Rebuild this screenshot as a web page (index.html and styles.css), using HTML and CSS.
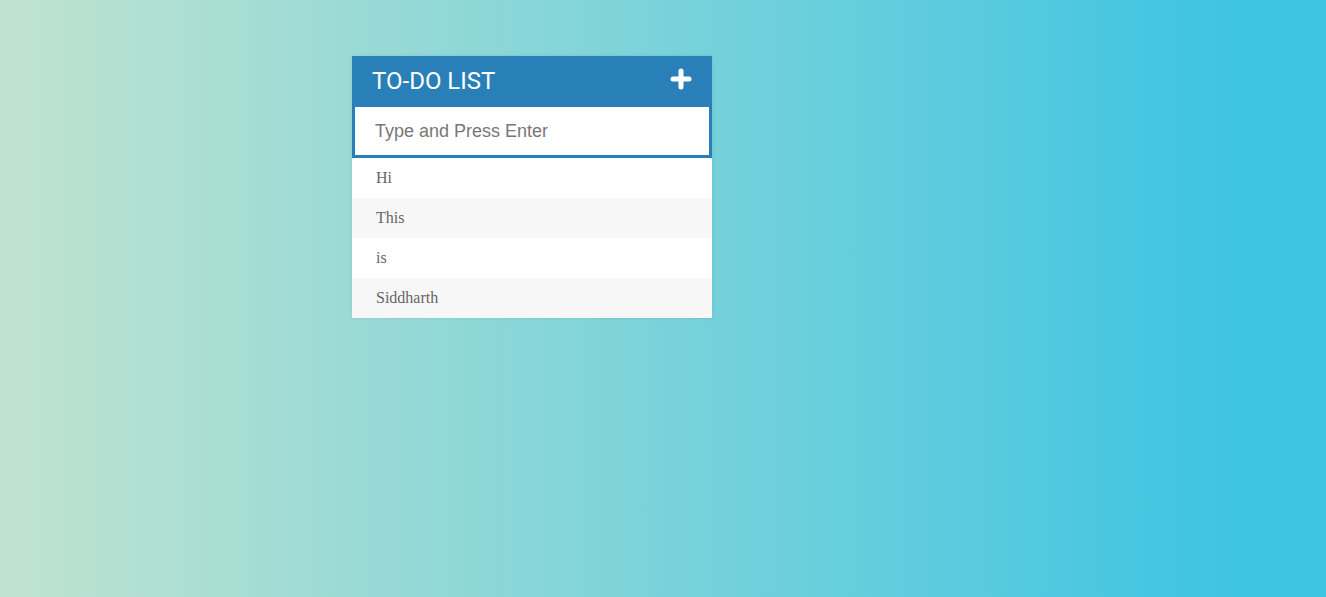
FILE: index.html
```html
<!DOCTYPE html>
<html>
<head>
<meta charset="utf-8">
<link rel="stylesheet" href="styles.css">
</head>
<body>
<div class="page">
  <div class="card">
    <div class="header">
      <h1 class="title">TO-DO LIST</h1>
      <svg class="plus" width="22" height="22" viewBox="0 0 22 22"><path d="M11 3 V19 M3 11 H19" stroke="#fff" stroke-width="5" stroke-linecap="round"/></svg>
    </div>
    <input class="entry" type="text" placeholder="Type and Press Enter" autofocus>
    <ul class="list">
      <li class="item">Hi</li>
      <li class="item">This</li>
      <li class="item">is</li>
      <li class="item">Siddharth</li>
    </ul>
  </div>
</div>
</body>
</html>
```

FILE: styles.css
```css
html, body {
  margin: 0;
  height: 100%;
}
body {
  background: linear-gradient(to right, #c0e3d0 0%, #3dc4e2 93%, #3cc4e2 100%);
  font-family: "Liberation Serif", serif;
}
.page {
  padding: 56px 0 0 352px;
}
.card {
  width: 360px;
  background: #fff;
  box-shadow: 0 0 3px rgba(0,0,0,0.1);
}
.header {
  background: #2980b9;
  height: 51px;
  display: flex;
  align-items: center;
  justify-content: space-between;
  padding: 0 20px;
}
.title {
  margin: 0;
  font-family: Roboto, sans-serif;
  font-weight: 400;
  font-size: 24px;
  color: #fff;
  padding-bottom: 2px;
}
.plus {
  display: block;
  margin-top: -6px;
}
.entry {
  display: block;
  box-sizing: border-box;
  width: 100%;
  height: 51px;
  margin: 0;
  border: 3px solid #2980b9;
  border-top: 0;
  padding: 0 20px 0;
  font-family: "Liberation Sans", Arial, sans-serif;
  font-size: 18px;
  color: #444;
  outline: none;
  background: #fff;
}
.entry::placeholder {
  color: #777;
}
.list {
  list-style: none;
  margin: 0;
  padding: 0;
}
.item {
  height: 40px;
  line-height: 40px;
  padding-left: 24px;
  font-size: 16px;
  color: #666;
  background: #fff;
}
.item:nth-child(even) {
  background: #f7f7f7;
}
```
